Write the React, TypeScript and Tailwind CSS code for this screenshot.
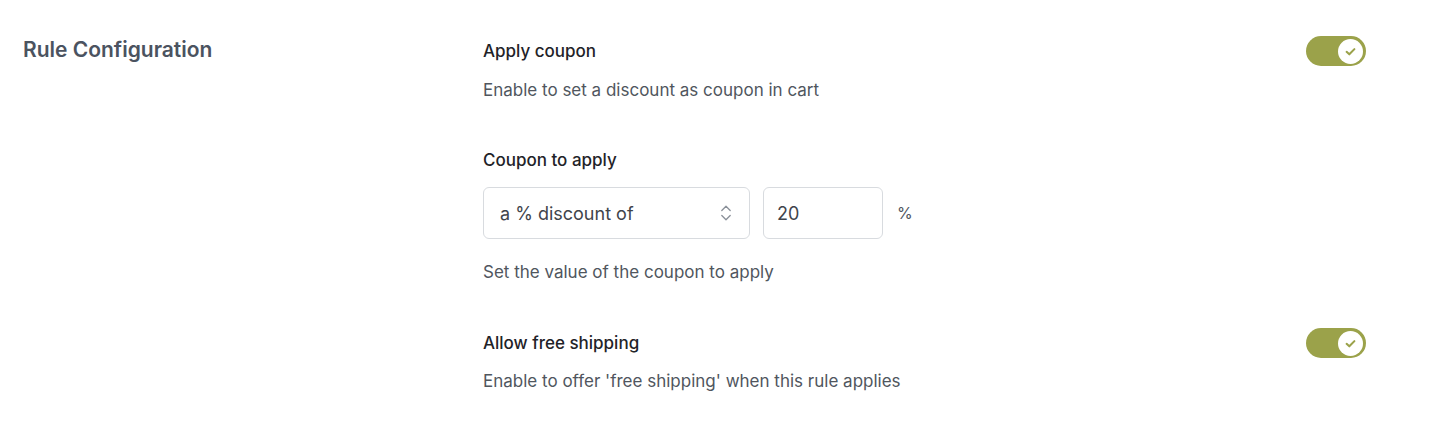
import React from "react";

function Toggle() {
  return (
    <div className="flex h-[30px] w-[60px] items-center justify-end rounded-full bg-[#9ba24a] pr-[3px]">
      <div className="flex h-[25px] w-[25px] items-center justify-center rounded-full bg-white">
        <svg width="13" height="13" viewBox="0 0 12 12" fill="none">
          <path d="M2.4 6.3 L4.9 8.6 L9.6 3.8" stroke="#9ba24a" strokeWidth="1.9" strokeLinecap="round" strokeLinejoin="round" />
        </svg>
      </div>
    </div>
  );
}

export default function App() {
  return (
    <div
      className="flex h-[432px] w-[1430px] bg-white pl-[23px] text-[17px] antialiased"
      style={{ fontFamily: "Inter, 'Noto Sans', sans-serif" }}
    >
      <div className="w-[460px] pt-[36px]">
        <h2 className="text-[21px] font-semibold leading-[28px] text-[#4b5360]">Rule Configuration</h2>
      </div>
      <div className="flex w-[883px] flex-col pt-[36px]">
        <div className="flex items-center justify-between">
          <div className="font-medium leading-[30px] text-[#1f2328]">Apply coupon</div>
          <Toggle />
        </div>
        <div className="mt-[11px] leading-[26px] text-[#50565e]">Enable to set a discount as coupon in cart</div>

        <div className="mt-[44px] font-medium leading-[26px] text-[#1f2328]">Coupon to apply</div>
        <div className="mt-[14px] flex items-center">
          <div className="flex h-[52px] w-[267px] items-center justify-between rounded-[6px] border border-[#d8dbdf] pl-[16px] pr-[17px] text-[18px] text-[#3f444b]">
            <span>a % discount of</span>
            <svg width="12" height="20" viewBox="0 0 12 20" fill="none">
              <path d="M1.8 7.5 L6 3.3 L10.2 7.5" stroke="#8a9099" strokeWidth="1.3" strokeLinecap="round" strokeLinejoin="round" />
              <path d="M1.8 12.5 L6 16.7 L10.2 12.5" stroke="#8a9099" strokeWidth="1.3" strokeLinecap="round" strokeLinejoin="round" />
            </svg>
          </div>
          <div className="ml-[13px] flex h-[52px] w-[120px] items-center rounded-[6px] border border-[#d8dbdf] pl-[13px] text-[18px] text-[#3f444b]">
            20
          </div>
          <span className="ml-[14px] text-[16px] text-[#50565e]">%</span>
        </div>
        <div className="mt-[20px] leading-[26px] text-[#50565e]">Set the value of the coupon to apply</div>

        <div className="mt-[43px] flex items-center justify-between">
          <div className="font-medium leading-[30px] text-[#1f2328]">Allow free shipping</div>
          <Toggle />
        </div>
        <div className="mt-[10px] leading-[26px] text-[#50565e]">Enable to offer 'free shipping' when this rule applies</div>
      </div>
    </div>
  );
}
